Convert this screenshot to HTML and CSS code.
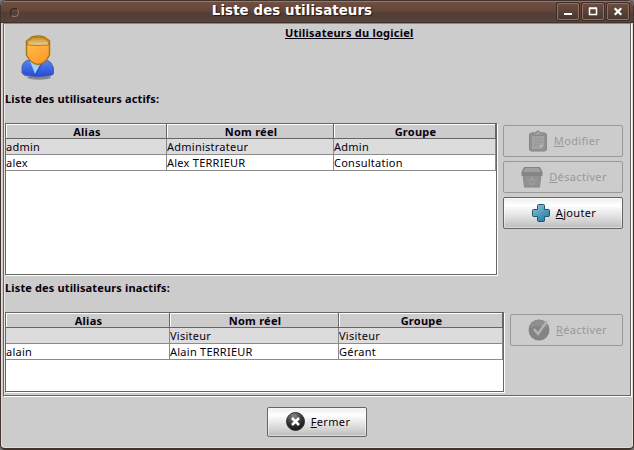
FILE: index.html
```html
<!DOCTYPE html>
<html lang="fr">
<head>
<meta charset="utf-8">
<title>Liste des utilisateurs</title>
<link rel="stylesheet" href="styles.css">
</head>
<body>
<div class="window">
  <header class="titlebar">
    <span class="menu-dot"></span>
    <h1 class="title">Liste des utilisateurs</h1>
    <div class="controls">
      <span class="ctl"><svg width="20" height="15"><path d="M6 10h8" stroke="#fff" stroke-width="2"/></svg></span>
      <span class="ctl"><svg width="20" height="15"><path d="M6.500 4.500h7v6h-7zM6 4h8" fill="none" stroke="#fff" stroke-width="1.500"/></svg></span>
      <span class="ctl"><svg width="20" height="15"><path d="M7.500 5l5 5M12.500 5l-5 5" stroke="#fff" stroke-width="2.200" stroke-linecap="square"/></svg></span>
    </div>
  </header>
  <main class="panel">
    <div class="intro">
      <svg class="user" width="34" height="48" viewBox="0 0 34 48">
        <defs>
          <linearGradient id="face" x2=".6" y2="1"><stop offset="0" stop-color="#ffc650"/><stop offset="1" stop-color="#ff9a2e"/></linearGradient>
          <linearGradient id="hair" x2="0" y2="1"><stop offset="0" stop-color="#c98b20"/><stop offset="1" stop-color="#ecd09a"/></linearGradient>
          <linearGradient id="coat" x2="0" y2="1"><stop offset="0" stop-color="#5a86ee"/><stop offset="1" stop-color="#2348d4"/></linearGradient>
        </defs>
        <ellipse cx="18" cy="42.500" rx="12" ry="2.200" fill="#85858c"/>
        <path d="M1 38V32Q2 26 8 25H26Q31 27 32.500 33V39Q30 41.500 25 41L17 42L9 41Q3 41.500 1 38Z" fill="url(#coat)" stroke="#5263a8"/>
        <path d="M9 26L14 39L21 26Z" fill="#9fd0f8"/>
        <path d="M22 27L14 40" stroke="#2849b4"/>
        <path d="M5.500 6L11 2Q17 0 23 2L28.500 6V20Q24 29 17 29.500Q10 29 5.500 20Z" fill="url(#face)" stroke="#a87912" stroke-width="1.500"/>
        <path d="M6.500 10V7L11.500 3Q17 1 22.500 3L27.500 7V10Q17 11 6.500 10Z" fill="url(#hair)" stroke="#b77c16"/>
      </svg>
      <h2 class="heading">Utilisateurs du logiciel</h2>
    </div>
    <p class="label label-active">Liste des utilisateurs actifs:</p>
    <div class="section section-active">
      <div class="list">
        <div class="row head"><span>Alias</span><span>Nom réel</span><span>Groupe</span></div>
        <div class="row shaded"><span>admin</span><span>Administrateur</span><span>Admin</span></div>
        <div class="row"><span>alex</span><span>Alex TERRIEUR</span><span>Consultation</span></div>
      </div>
      <div class="actions">
        <button class="btn disabled" disabled>
          <svg width="20" height="22" viewBox="0 0 20 22"><rect x="1.500" y="3" width="17" height="18" rx="2" fill="#929292" stroke="#858585"/><path d="M4 6h12v9l-4 4H4z" fill="#a2a2a2"/><path d="M6 9h8M6 12h8M6 15h5" stroke="#949494"/><path d="M5 5V3h3l1-2h2l1 2h3v2z" fill="#a9a9a9" stroke="#858585"/><path d="M12 19v-4h4z" fill="#b8b8b8"/></svg>
          <span class="txt"><u>M</u>odifier</span>
        </button>
        <button class="btn disabled" disabled>
          <svg width="22" height="22" viewBox="0 0 22 22"><path d="M2 8h18l-1.500 13H3.500z" fill="#929292" stroke="#888"/><path d="M3 1h16l2.500 5v4H.5V6z" fill="#858585"/><path d="M4 2h14l1.500 4h-17z" fill="#a0a0a0"/><path d="M8 16l3-4 3 4M8.500 18h5" fill="none" stroke="#a0a0a0" stroke-width="1.500"/></svg>
          <span class="txt"><u>D</u>ésactiver</span>
        </button>
        <button class="btn add">
          <svg width="18" height="18" viewBox="0 0 18 18"><defs><linearGradient id="plus" x2=".7" y2="1"><stop offset="0" stop-color="#8fc8dc"/><stop offset="1" stop-color="#267da6"/></linearGradient></defs><path d="M5.500 1.500Q5.500.5 6.500.5h5q1 0 1 1v4h4q1 0 1 1v5q0 1-1 1h-4v4q0 1-1 1h-5q-1 0-1-1v-4h-4q-1 0-1-1v-5q0-1 1-1h4z" fill="url(#plus)" stroke="#245468"/></svg>
          <span class="txt"><u>A</u>jouter</span>
        </button>
      </div>
    </div>
    <p class="label label-inactive">Liste des utilisateurs inactifs:</p>
    <div class="section section-inactive">
      <div class="list">
        <div class="row head"><span>Alias</span><span>Nom réel</span><span>Groupe</span></div>
        <div class="row shaded"><span></span><span>Visiteur</span><span>Visiteur</span></div>
        <div class="row"><span>alain</span><span>Alain TERRIEUR</span><span>Gérant</span></div>
      </div>
      <div class="actions">
        <button class="btn disabled" disabled>
          <svg width="22" height="22" viewBox="0 0 22 22"><circle cx="11" cy="11" r="10.500" fill="#838383"/><path d="M2 9a9 8 0 0 1 18 0q-9-4-18 0z" fill="#8f8f8f"/><path d="M6 10l4 5 9-13" fill="none" stroke="#b2b2b2" stroke-width="2.500"/></svg>
          <span class="txt"><u>R</u>éactiver</span>
        </button>
      </div>
    </div>
  </main>
  <footer class="footer">
    <button class="btn close">
      <svg width="19" height="19" viewBox="0 0 19 19"><defs><radialGradient id="ball" cx=".4" cy=".2" r=".8"><stop offset="0" stop-color="#888"/><stop offset=".6" stop-color="#333"/><stop offset="1" stop-color="#111"/></radialGradient></defs><circle cx="9.500" cy="9.500" r="9" fill="url(#ball)" stroke="#333"/><path d="M6 6l7 7M13 6l-7 7" stroke="#fff" stroke-width="2.500"/></svg>
      <span class="txt"><u>F</u>ermer</span>
    </button>
  </footer>
</div>
</body>
</html>
```
FILE: styles.css
```css
* { box-sizing: border-box; }
body {
  margin: 0;
  background: #777;
  font: 11px/15px "Noto Sans", sans-serif;
  color: #08000c;
}
h1, h2, p { margin: 0; }
.window {
  width: 634px;
  height: 450px;
  display: flex;
  flex-direction: column;
  background: #ccc;
  border: 1px solid #43332d;
  border-bottom-width: 2px;
  border-radius: 6px 6px 5px 5px;
  overflow: hidden;
  box-shadow: inset 1px -1px #e4ddd5, inset -1px 0 #e4ddd5;
}
.titlebar {
  height: 22px;
  flex: none;
  display: flex;
  align-items: center;
  padding: 0 4px 0 9px;
  background: linear-gradient(#714f43, #644539 45%, #503e36 55%, #594239);
  border-top: 1px solid #987568;
  border-bottom: 1px solid #43332d;
}
.menu-dot {
  width: 9px;
  height: 9px;
  border: 1px solid #9b7a6d;
  border-top-color: #30221d;
  border-left-color: #30221d;
  border-radius: 50%;
}
.title {
  flex: 1;
  margin-top: -2px;
  padding-left: 8px;
  text-align: center;
  color: #fff;
  font: bold 13.33px/18px "DejaVu Sans", sans-serif;
  letter-spacing: .1px;
  text-shadow: 1px 1px 1px #251813;
}
.controls { display: flex; gap: 3px; margin-top: -1px; }
.ctl {
  width: 22px;
  height: 17px;
  border: 1px solid #93705f;
  border-radius: 2px;
  background: linear-gradient(#6c4c40, #49382f);
  box-shadow: 0 0 0 1px #3d2c26;
}
.ctl svg, .btn svg { display: block; flex: none; }
.panel {
  height: 373px;
  flex: none;
  margin: 0 2px;
  border: 1px solid #666;
  border-top-color: #8b8580;
  box-shadow: 1px 1px #fff, inset 1px 0 #e8e8e8;
  display: flex;
  flex-direction: column;
  padding-left: 1px;
}
.intro { display: flex; height: 66px; }
.user { margin: 11px 0 0 16px; }
.heading {
  margin: 1px 0 0 230px;
  font: bold 11px/15px "Noto Sans", sans-serif;
  text-decoration: underline;
  text-underline-offset: 1px;
  white-space: nowrap;
  letter-spacing: .23px;
}
.label {
  height: 16px;
  padding-top: 1px;
  font-weight: bold;
  white-space: nowrap;
  letter-spacing: .14px;
}
.label-active { margin-bottom: 17px; }
.section { display: flex; }
.section-active { height: 152px; gap: 6px; --c1: 161px; --c2: 167px; }
.label-inactive { margin: 5px 0 16px; padding-top: 0; }
.section-inactive { height: 80px; gap: 6px; --c1: 164px; --c2: 169px; }
.list {
  width: 492px;
  background: #fff;
  border: 1px solid #666;
  box-shadow: 1px 1px #fff;
}
.section-inactive .list { width: 499px; }
.row {
  height: 16px;
  display: grid;
  grid-template-columns: var(--c1) var(--c2) 1fr;
  white-space: nowrap;
}
.row span {
  border-right: 1px solid #8b8b8b;
  border-bottom: 1px solid #8b8b8b;
  overflow: hidden;
  letter-spacing: .25px;
}
.row.head { height: 15px; }
.row.head span {
  padding-left: 2px;
  background: #ccc;
  text-align: center;
  font-weight: bold;
  border-color: #666;
  box-shadow: inset 1px 1px #fff;
}
.row.shaded span { background: #dcdcdc; }
.actions {
  flex: none;
  width: 120px;
  display: flex;
  flex-direction: column;
  gap: 4px;
  padding-top: 2px;
}
.section-inactive .actions { width: 113px; }
.btn {
  height: 32px;
  padding: 0 0 1px 2px;
  display: flex;
  align-items: center;
  justify-content: center;
  gap: 6px;
  border: 1px solid #666;
  border-radius: 2px;
  background: linear-gradient(#eee, #fff 25%, #ddd 65%, #bdbdbd);
  box-shadow: inset 0 0 0 1px #ffffff70;
  color: #08000c;
  font: 11px/15px "Noto Sans", sans-serif;
}
.btn.disabled { background: #ccc; border-color: #999; color: #999; box-shadow: none; }
.btn .txt { letter-spacing: .35px; }
.btn u { text-underline-offset: 1px; }
.footer { display: flex; padding: 11px 0 0 266px; }
.close { width: 100px; height: 30px; }
```
